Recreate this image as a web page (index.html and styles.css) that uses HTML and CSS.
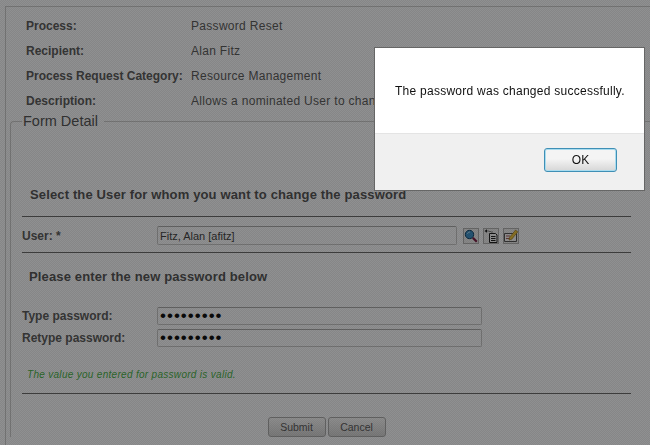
FILE: index.html
```html
<!DOCTYPE html>
<html lang="en">
<head>
    <meta charset="UTF-8">
    <title>Password Reset</title>
    <link rel="stylesheet" href="styles.css">
</head>
<body>
    <div class="panel">
        <div class="summary">
            <div class="summary-label">Process:</div>
            <div class="summary-value">Password Reset</div>
            <div class="summary-label">Recipient:</div>
            <div class="summary-value">Alan Fitz</div>
            <div class="summary-label">Process Request Category:</div>
            <div class="summary-value">Resource Management</div>
            <div class="summary-label">Description:</div>
            <div class="summary-value">Allows a nominated User to change the password of a User</div>
        </div>
        <fieldset class="form-detail">
            <legend>Form Detail</legend>
            <h2 class="section-title first">Select the User for whom you want to change the password</h2>
            <hr>
            <div class="user-row">
                <label class="field-label">User: *</label>
                <input class="text-field user-field" type="text" value="Fitz, Alan [afitz]">
                <div class="tools">
                    <span class="tool">
                        <svg width="14" height="14" viewBox="0 0 14 14">
                            <circle cx="5.500" cy="5.500" r="4.200" fill="#3f8fc4" stroke="#1b4a6b"/>
                            <path d="M3.500 4.800a2.500 2.500 0 0 1 2.500-1.800" fill="none" stroke="#a8d4ee"/>
                            <path d="M8.800 8.800l4 4" stroke="#7a1f45" stroke-width="2.200"/>
                        </svg>
                    </span>
                    <span class="tool">
                        <svg width="14" height="14" viewBox="0 0 14 14">
                            <path d="M5.500 4.500h6l1.500 1.500v7.500h-7.500z" fill="#f4f4f4" stroke="#222"/>
                            <path d="M7 7.500h4.500M7 9.500h4.500M7 11.500h4.500" stroke="#222"/>
                            <path d="M.5 2l2.500-1.800v3.600z" fill="#222"/>
                            <path d="M3.500 2h1M5.500 2.500h1M7.500 3h1" stroke="#222"/>
                        </svg>
                    </span>
                    <span class="tool">
                        <svg width="14" height="14" viewBox="0 0 14 14">
                            <path d="M.5 4.500h12v8h-12z" fill="#f4f4f4" stroke="#555"/>
                            <path d="M2 7h4M2 9.500h6" stroke="#a05a5a"/>
                            <path d="M5.500 8.500l6-7.500 2.300 1.800-6 7.400-2.800.8z" fill="#e8c040" stroke="#8a6a1a" stroke-width=".6"/>
                        </svg>
                    </span>
                </div>
            </div>
            <hr class="rule-second">
            <h2 class="section-title second">Please enter the new password below</h2>
            <div class="password-rows">
                <label class="field-label">Type password:</label>
                <input class="text-field password-field" type="password" value="secret123">
                <label class="field-label">Retype password:</label>
                <input class="text-field password-field" type="password" value="secret123">
            </div>
            <p class="valid-msg">The value you entered for password is valid.</p>
            <hr>
            <div class="actions">
                <button class="btn" type="button">Submit</button>
                <button class="btn" type="button">Cancel</button>
            </div>
        </fieldset>
    </div>

    <div class="overlay"></div>

    <!-- Confirmation dialog -->
    <div class="dialog">
        <div class="dialog-body">The password was changed successfully.</div>
        <div class="dialog-footer">
            <button class="ok-btn" type="button">OK</button>
        </div>
    </div>
</body>
</html>
```

FILE: styles.css
```css
html, body {
    height: 100%;
}
body {
    font-family: "Liberation Sans", Arial, sans-serif;
    font-size: 12px;
    margin: 0;
    background-color: #f4f5f6;
    color: #5c5c5c;
    overflow: hidden;
}
.panel {
    margin: 6px 0 0 5px;
    border-top: 1px solid #c8c8c8;
    border-left: 1px solid #c8c8c8;
    padding: 6px 0 0 4px;
    height: 460px;
    box-sizing: border-box;
}
.summary {
    display: grid;
    grid-template-columns: 165px 184px;
    grid-auto-rows: 25px;
    align-items: center;
    padding-left: 16px;
}
.summary-label {
    font-weight: bold;
    white-space: nowrap;
}
.summary-value {
    white-space: nowrap;
    overflow: hidden;
    letter-spacing: 0.3px;
}
.form-detail {
    margin: 0;
    padding: 0 0 0 11px;
    border: 0;
    border-top: 1px solid #c8c8c8;
    border-left: 1px solid #c8c8c8;
    border-top-left-radius: 4px;
    min-width: 0;
}
.form-detail legend {
    font-size: 14.5px;
    padding: 0 6px 0 1px;
    margin-left: 0;
    color: #565656;
}
.section-title {
    font-size: 13px;
    font-weight: bold;
    margin: 0;
    color: #565656;
    letter-spacing: 0.14px;
}
.section-title.first {
    padding: 58px 0 0 8px;
}
.section-title.second {
    padding: 16px 0 0 7px;
}
hr {
    border: 0;
    border-top: 1px solid #6a6a6a;
    margin: 14px 0 0;
    width: 609px;
}
.rule-second {
    margin-top: 7px;
}
.user-row {
    display: flex;
    align-items: center;
    margin-top: 9px;
}
.field-label {
    width: 135px;
    font-weight: bold;
    flex-shrink: 0;
}
.text-field {
    box-sizing: border-box;
    background: #f4f5f6;
    border: 1px solid #c4c4c4;
    border-top-color: #a8a8a8;
    border-radius: 2px;
    font-family: "Liberation Sans", Arial, sans-serif;
    font-size: 11px;
    color: #444;
    padding: 0 2px;
    margin: 0;
}
.user-field {
    width: 300px;
    height: 19px;
}
.tools {
    display: flex;
    gap: 4px;
    margin-left: 6px;
}
.tool {
    display: block;
    box-sizing: border-box;
    width: 16px;
    height: 16px;
    border: 1px solid #b0b0b0;
    background: #e8e8e8;
}
.tool svg {
    display: block;
}
.password-rows {
    display: grid;
    grid-template-columns: 135px 325px;
    row-gap: 4px;
    align-items: center;
    margin-top: 23px;
}
.password-field {
    width: 325px;
    height: 18px;
    font-size: 17px;
    letter-spacing: 1px;
    color: #111;
}
.valid-msg {
    font-size: 10px;
    font-style: italic;
    letter-spacing: 0.3px;
    color: #4cb04c;
    margin: 22px 0 0 5px;
}
.valid-msg + hr {
    margin-top: 13px;
}
.actions {
    display: flex;
    justify-content: center;
    gap: 2px;
    width: 609px;
    margin-top: 23px;
}
.btn {
    width: 58px;
    height: 20px;
    padding: 0;
    border: 1px solid #a8a8a8;
    border-radius: 3px;
    background: linear-gradient(#f2f2f2, #cfcfcf);
    color: #5c5c5c;
    font-family: "Liberation Sans", Arial, sans-serif;
    font-size: 10.5px;
}
/* Dims the page behind the dialog, with the dither seen on the backdrop */
.overlay {
    position: fixed;
    top: 0;
    left: 0;
    width: 100%;
    height: 100%;
    background: repeating-conic-gradient(rgba(0, 0, 0, 0.45) 0 25%, rgba(0, 0, 0, 0.41) 0 50%) 0 0 / 2px 2px;
}
.dialog {
    position: fixed;
    top: 48px;
    left: 375px;
    width: 269px;
    height: 142px;
    display: flex;
    flex-direction: column;
    background: #fff;
    box-shadow: 0 0 0 1px #666;
}
.dialog-body {
    height: 85px;
    box-sizing: border-box;
    padding: 36px 0 0 20px;
    font-size: 12px;
    letter-spacing: 0.26px;
    color: #111;
    white-space: nowrap;
}
.dialog-footer {
    flex: 1;
    display: flex;
    justify-content: flex-end;
    align-items: flex-start;
    padding: 14px 27px 0 0;
    background: #f0f0f0;
    border-top: 1px solid #e4e4e4;
}
.ok-btn {
    width: 73px;
    height: 24px;
    padding: 0;
    border: 1px solid #3f8fb5;
    border-radius: 3px;
    box-shadow: inset 0 0 0 1px #a9dcef;
    background: linear-gradient(#f4f4f4 45%, #d6d6d6);
    color: #111;
    font-family: "Liberation Sans", Arial, sans-serif;
    font-size: 12px;
}
```
